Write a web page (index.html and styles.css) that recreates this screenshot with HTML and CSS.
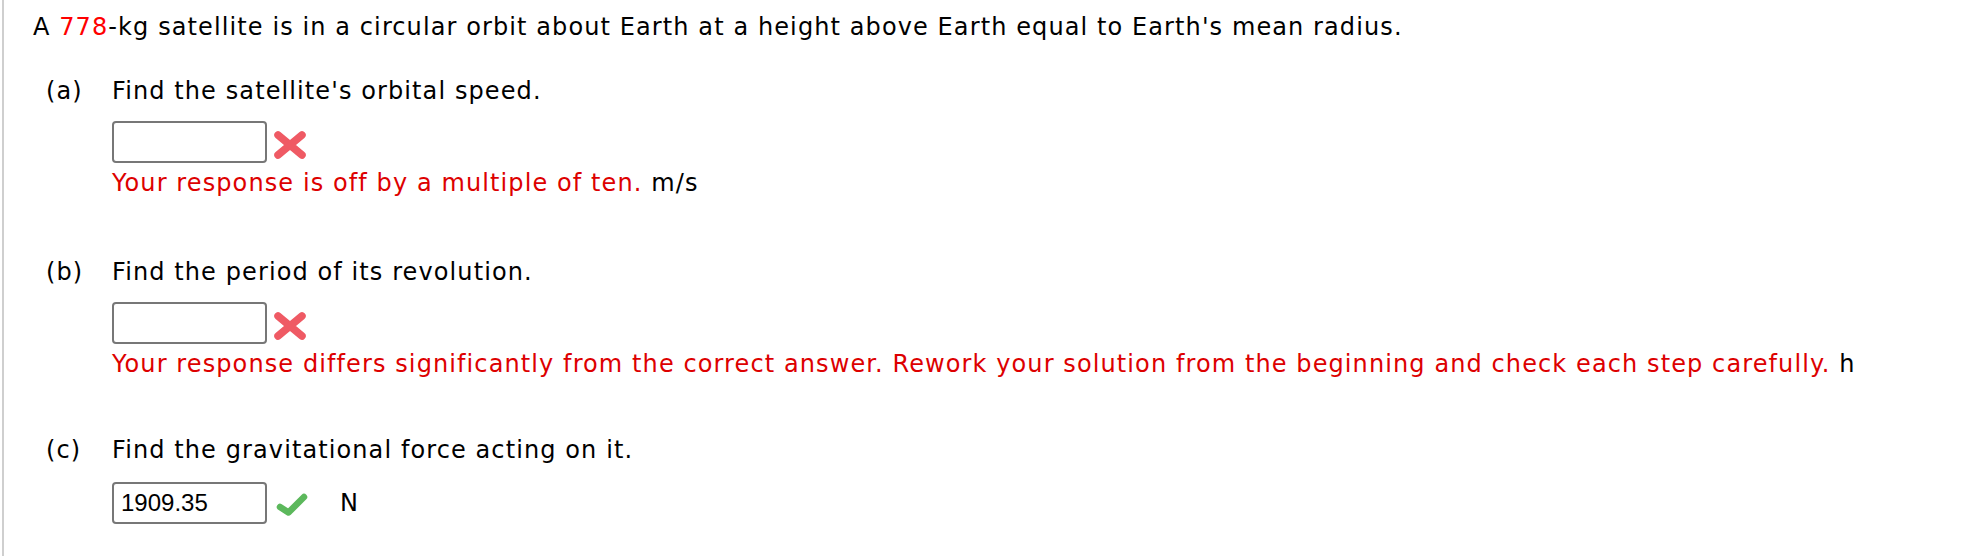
FILE: index.html
```html
<!DOCTYPE html>
<html lang="en">
<head>
<meta charset="utf-8">
<title>Satellite orbit question</title>
<link rel="stylesheet" href="styles.css">
</head>
<body>
<div class="page">
  <p class="stem">A <span class="var">778</span>-kg satellite is in a circular orbit about Earth at a height above Earth equal to Earth's mean radius.</p>

  <div class="part">
    <div class="part-head"><span class="label">(a)</span><span class="prompt">Find the satellite's orbital speed.</span></div>
    <div class="part-body">
      <div class="answer-row">
        <span class="box"></span>
        <svg class="mark mark-x" viewBox="0 0 32 28" width="32" height="28" aria-hidden="true"><path d="M4 4 L28 24 M28 4 L4 24" stroke="#ef5a64" stroke-width="7.5" stroke-linecap="round" fill="none"/></svg>
      </div>
      <div class="feedback"><span class="err">Your response is off by a multiple of ten.</span> m/s</div>
    </div>
  </div>

  <div class="part">
    <div class="part-head"><span class="label">(b)</span><span class="prompt">Find the period of its revolution.</span></div>
    <div class="part-body">
      <div class="answer-row">
        <span class="box"></span>
        <svg class="mark mark-x" viewBox="0 0 32 28" width="32" height="28" aria-hidden="true"><path d="M4 4 L28 24 M28 4 L4 24" stroke="#ef5a64" stroke-width="7.5" stroke-linecap="round" fill="none"/></svg>
      </div>
      <div class="feedback"><span class="err">Your response differs significantly from the correct answer. Rework your solution from the beginning and check each step carefully.</span> h</div>
    </div>
  </div>

  <div class="part part-last">
    <div class="part-head"><span class="label">(c)</span><span class="prompt">Find the gravitational force acting on it.</span></div>
    <div class="part-body">
      <div class="answer-row">
        <span class="box filled">1909.35</span>
        <svg class="mark mark-check" viewBox="0 0 32 24" width="32" height="24" aria-hidden="true"><path d="M4 15 L12.5 20.5 L28 5" stroke="#5cb85c" stroke-width="6.5" stroke-linecap="round" stroke-linejoin="round" fill="none"/></svg>
        <span class="unit">N</span>
      </div>
    </div>
  </div>
</div>
</body>
</html>
```

FILE: styles.css
```css
html, body {
  margin: 0;
  padding: 0;
  background: #fff;
}

body {
  font-family: "DejaVu Sans", Verdana, sans-serif;
  font-size: 24px;
  letter-spacing: 1.1px;
  line-height: 30px;
  color: #000;
}

.page {
  margin-left: 2px;
  border-left: 2px solid #cfcfcf;
  padding: 12px 0 0 29px;
  min-height: 100vh;
  box-sizing: border-box;
}

.stem {
  margin: 0;
  white-space: nowrap;
}

.var {
  color: #ff0000;
}

.part {
  margin-top: 59px;
}

.stem + .part {
  margin-top: 34px;
}

.part-last {
  margin-top: 56px;
}

.part-head {
  display: flex;
}

.label {
  width: 79px;
  padding-left: 13px;
  box-sizing: border-box;
  flex: none;
}

.part-body {
  margin-left: 79px;
  margin-top: 15px;
}

.part-last .part-body {
  margin-top: 17px;
}

.answer-row {
  display: flex;
  align-items: center;
  height: 42px;
}

.box {
  width: 155px;
  height: 42px;
  box-sizing: border-box;
  border: 2px solid #777;
  border-radius: 4px;
  flex: none;
  font-family: "Liberation Sans", Arial, sans-serif;
  font-size: 24px;
  letter-spacing: 0;
  line-height: 38px;
  padding-left: 7px;
}

.mark {
  flex: none;
  display: block;
}

.mark-x {
  margin-left: 7px;
  margin-top: 5px;
}

.mark-check {
  margin-left: 9px;
  margin-top: 2px;
}

.unit {
  margin-left: 32px;
}

.feedback {
  margin-top: 5px;
  white-space: nowrap;
}

.err {
  color: #dd0000;
}
```
